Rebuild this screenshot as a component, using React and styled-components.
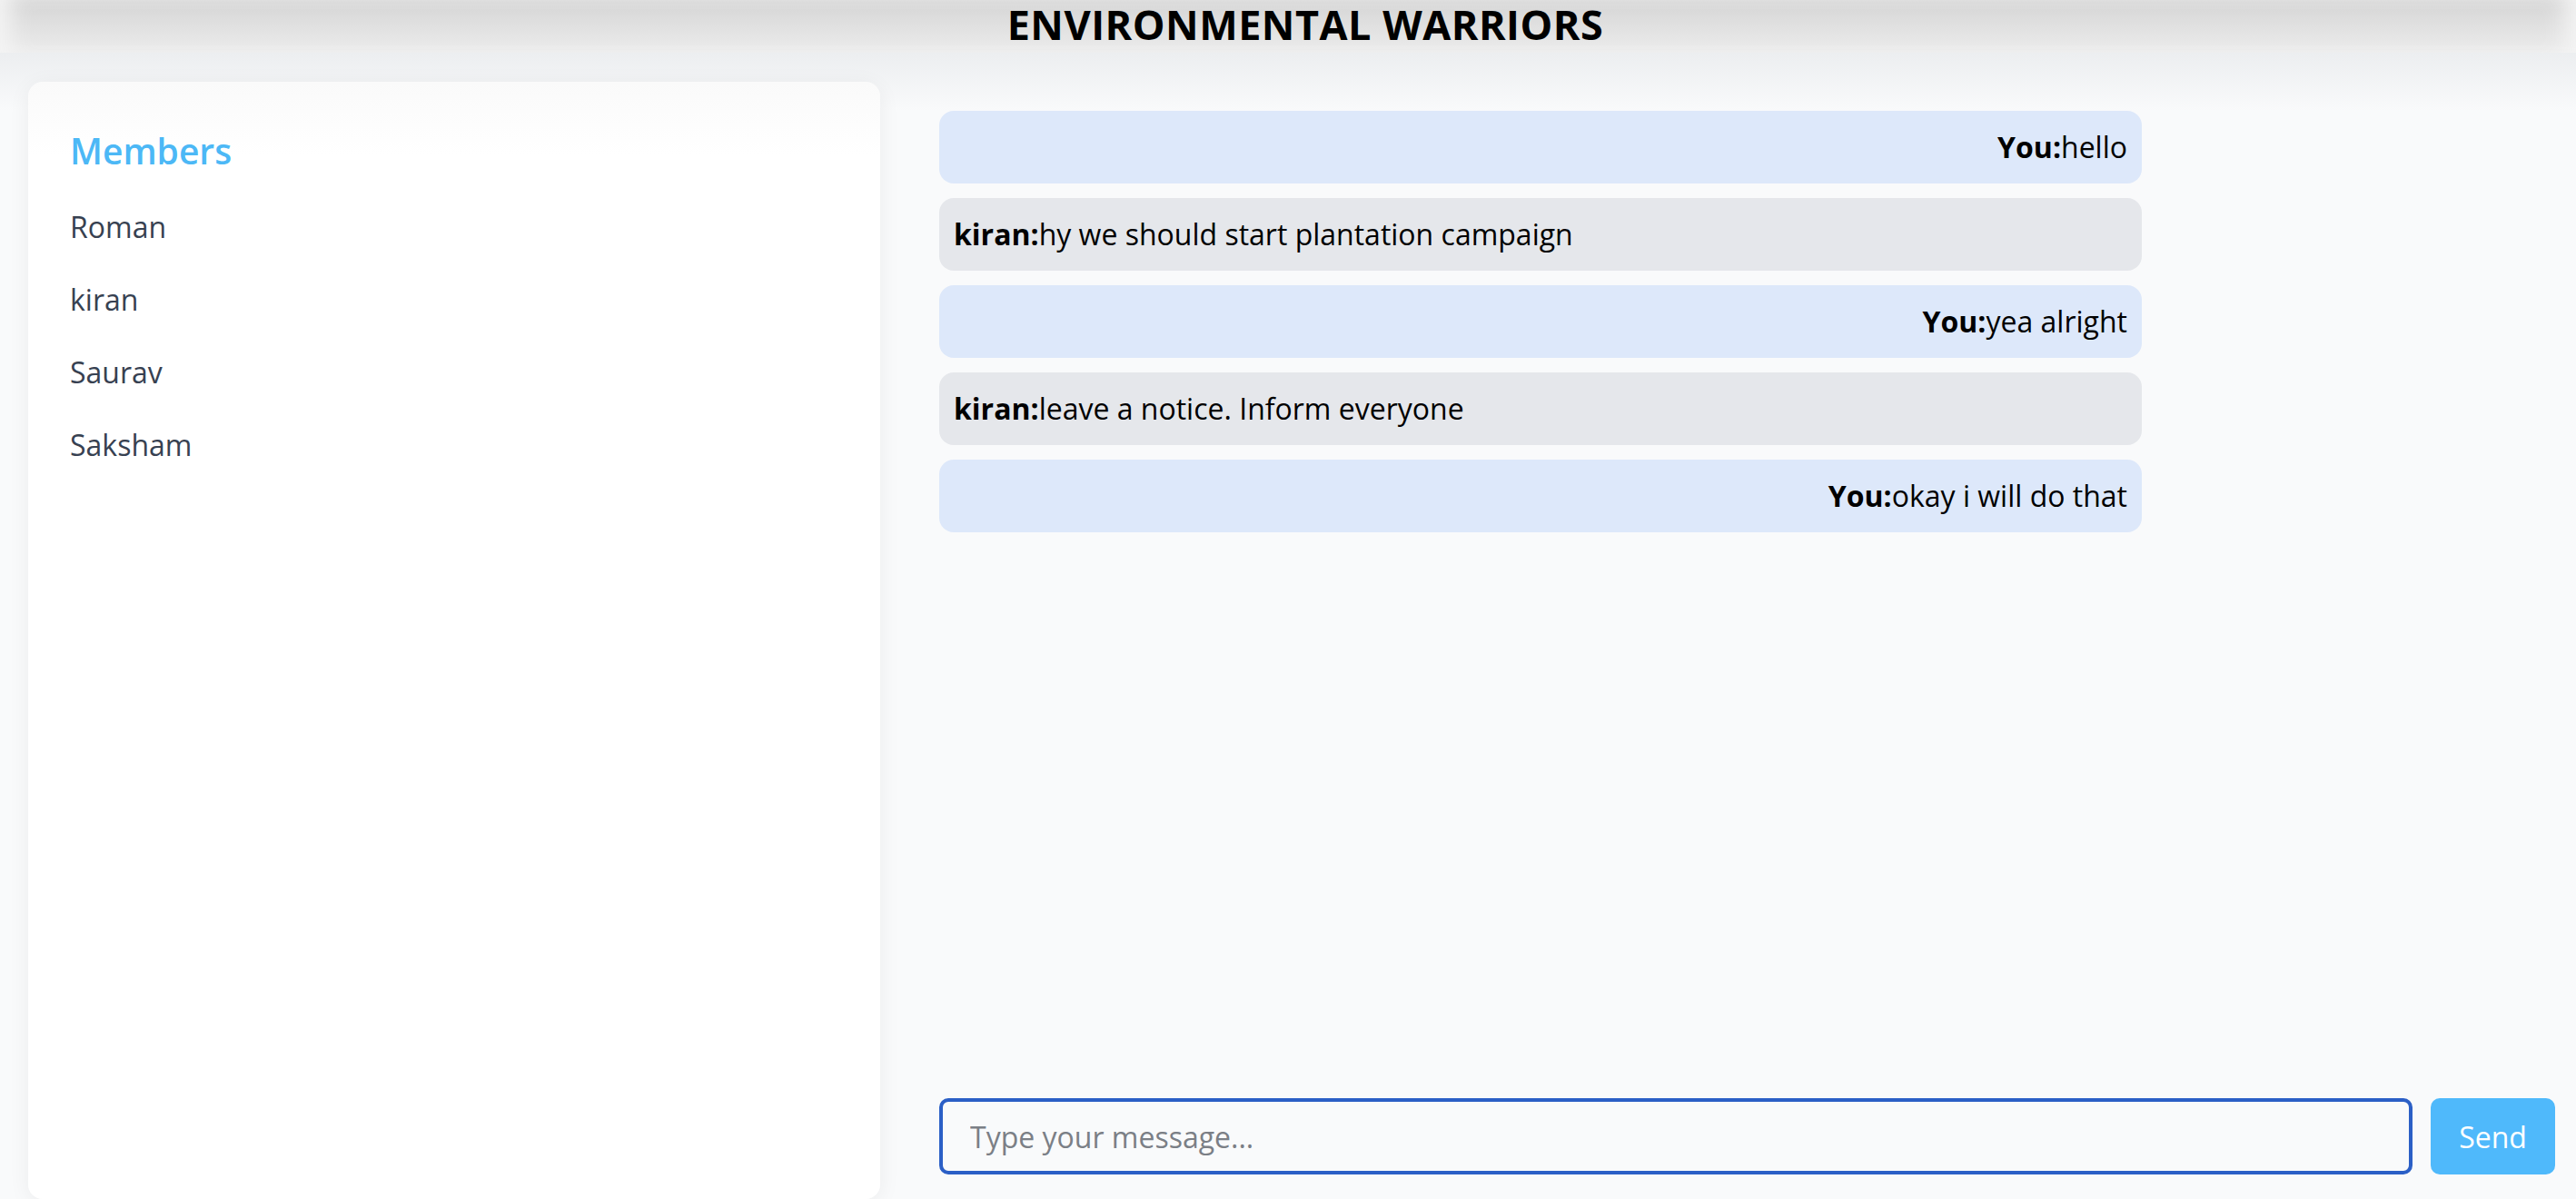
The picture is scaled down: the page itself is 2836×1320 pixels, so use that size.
import React from 'react';
import styled, { createGlobalStyle } from 'styled-components';

const GlobalStyle = createGlobalStyle`
  html, body {
    margin: 0;
    padding: 0;
    background: #f9fafb;
    font-family: 'Open Sans', 'Noto Sans', sans-serif;
  }
  * {
    box-sizing: border-box;
  }
`;

const members = ['Roman', 'kiran', 'Saurav', 'Saksham'];

const messages = [
  { sender: 'You', text: 'hello', mine: true },
  { sender: 'kiran', text: 'hy we should start plantation campaign', mine: false },
  { sender: 'You', text: 'yea alright', mine: true },
  { sender: 'kiran', text: 'leave a notice. Inform everyone', mine: false },
  { sender: 'You', text: 'okay i will do that', mine: true },
];

const Page = styled.div`
  display: flex;
  flex-direction: column;
  height: 1320px;
  overflow: hidden;
`;

const Header = styled.header`
  flex: 0 0 58px;
  display: flex;
  align-items: center;
  justify-content: center;
  padding-left: 38px;
  padding-bottom: 4px;
  background: linear-gradient(to bottom, #d5d5d5, #ececec);
  box-shadow: inset 24px 0 24px -12px #f4f4f4, inset -24px 0 24px -12px #f4f4f4;
`;

const Title = styled.h1`
  margin: 0;
  font-size: 45px;
  line-height: 46px;
  font-weight: 700;
  color: #000;
  letter-spacing: 0.5px;
`;

const Main = styled.main`
  flex: 1;
  display: flex;
  min-height: 0;
  padding: 32px 23px 0 31px;
  background: linear-gradient(to bottom, #eceef0, #f9fafb 64px);
`;

const MembersPanel = styled.aside`
  flex: 0 0 938px;
  border-radius: 16px;
  padding: 48px 46px;
  box-shadow: 0 4px 24px rgba(0, 0, 0, 0.06);
  background: linear-gradient(to bottom, #fafafa, #ffffff 80px);
`;

const PanelTitle = styled.h2`
  margin: 0 0 32px;
  font-size: 39px;
  line-height: 56px;
  font-weight: 600;
  color: #4cb8f6;
`;

const MemberList = styled.ul`
  list-style: none;
  margin: 0;
  padding: 0;
  display: flex;
  flex-direction: column;
  gap: 32px;
`;

const MemberItem = styled.li`
  font-size: 32px;
  line-height: 48px;
  color: #374151;
`;

const ChatColumn = styled.section`
  flex: 1;
  display: flex;
  flex-direction: column;
  padding: 32px 0 27px 65px;
`;

const MessageList = styled.div`
  flex: 1;
  display: flex;
  flex-direction: column;
  gap: 16px;
`;

const Bubble = styled.div`
  width: 1324px;
  padding: 16px;
  border-radius: 16px;
  font-size: 32px;
  line-height: 48px;
  color: #000;
  text-align: ${(p) => (p.$mine ? 'right' : 'left')};
  background: ${(p) => (p.$mine ? '#dde8fa' : '#e5e7eb')};
`;

const Sender = styled.strong`
  font-weight: 700;
`;

const InputRow = styled.form`
  display: flex;
  gap: 20px;
  height: 84px;
  margin: 0;
`;

const MessageInput = styled.input`
  flex: 1;
  min-width: 0;
  height: 100%;
  padding: 0 30px;
  border: 4px solid #2b5fc6;
  border-radius: 10px;
  background: #f9fafb;
  font-family: inherit;
  font-size: 32px;
  color: #111;
  outline: none;

  &::placeholder {
    color: #7b7f86;
  }
`;

const SendButton = styled.button`
  flex: 0 0 137px;
  height: 100%;
  border: none;
  border-radius: 10px;
  background: #4fb9fb;
  color: #fff;
  font-family: inherit;
  font-size: 32px;
  cursor: pointer;
`;

const App = () => (
  <Page>
    <GlobalStyle />
    <Header>
      <Title>ENVIRONMENTAL WARRIORS</Title>
    </Header>
    <Main>
      <MembersPanel>
        <PanelTitle>Members</PanelTitle>
        <MemberList>
          {members.map((name) => (
            <MemberItem key={name}>{name}</MemberItem>
          ))}
        </MemberList>
      </MembersPanel>
      <ChatColumn>
        <MessageList>
          {messages.map((m, i) => (
            <Bubble key={i} $mine={m.mine}>
              <Sender>{m.sender}:</Sender>
              {m.text}
            </Bubble>
          ))}
        </MessageList>
        <InputRow onSubmit={(e) => e.preventDefault()}>
          <MessageInput type="text" placeholder="Type your message..." />
          <SendButton type="submit">Send</SendButton>
        </InputRow>
      </ChatColumn>
    </Main>
  </Page>
);

export default App;
